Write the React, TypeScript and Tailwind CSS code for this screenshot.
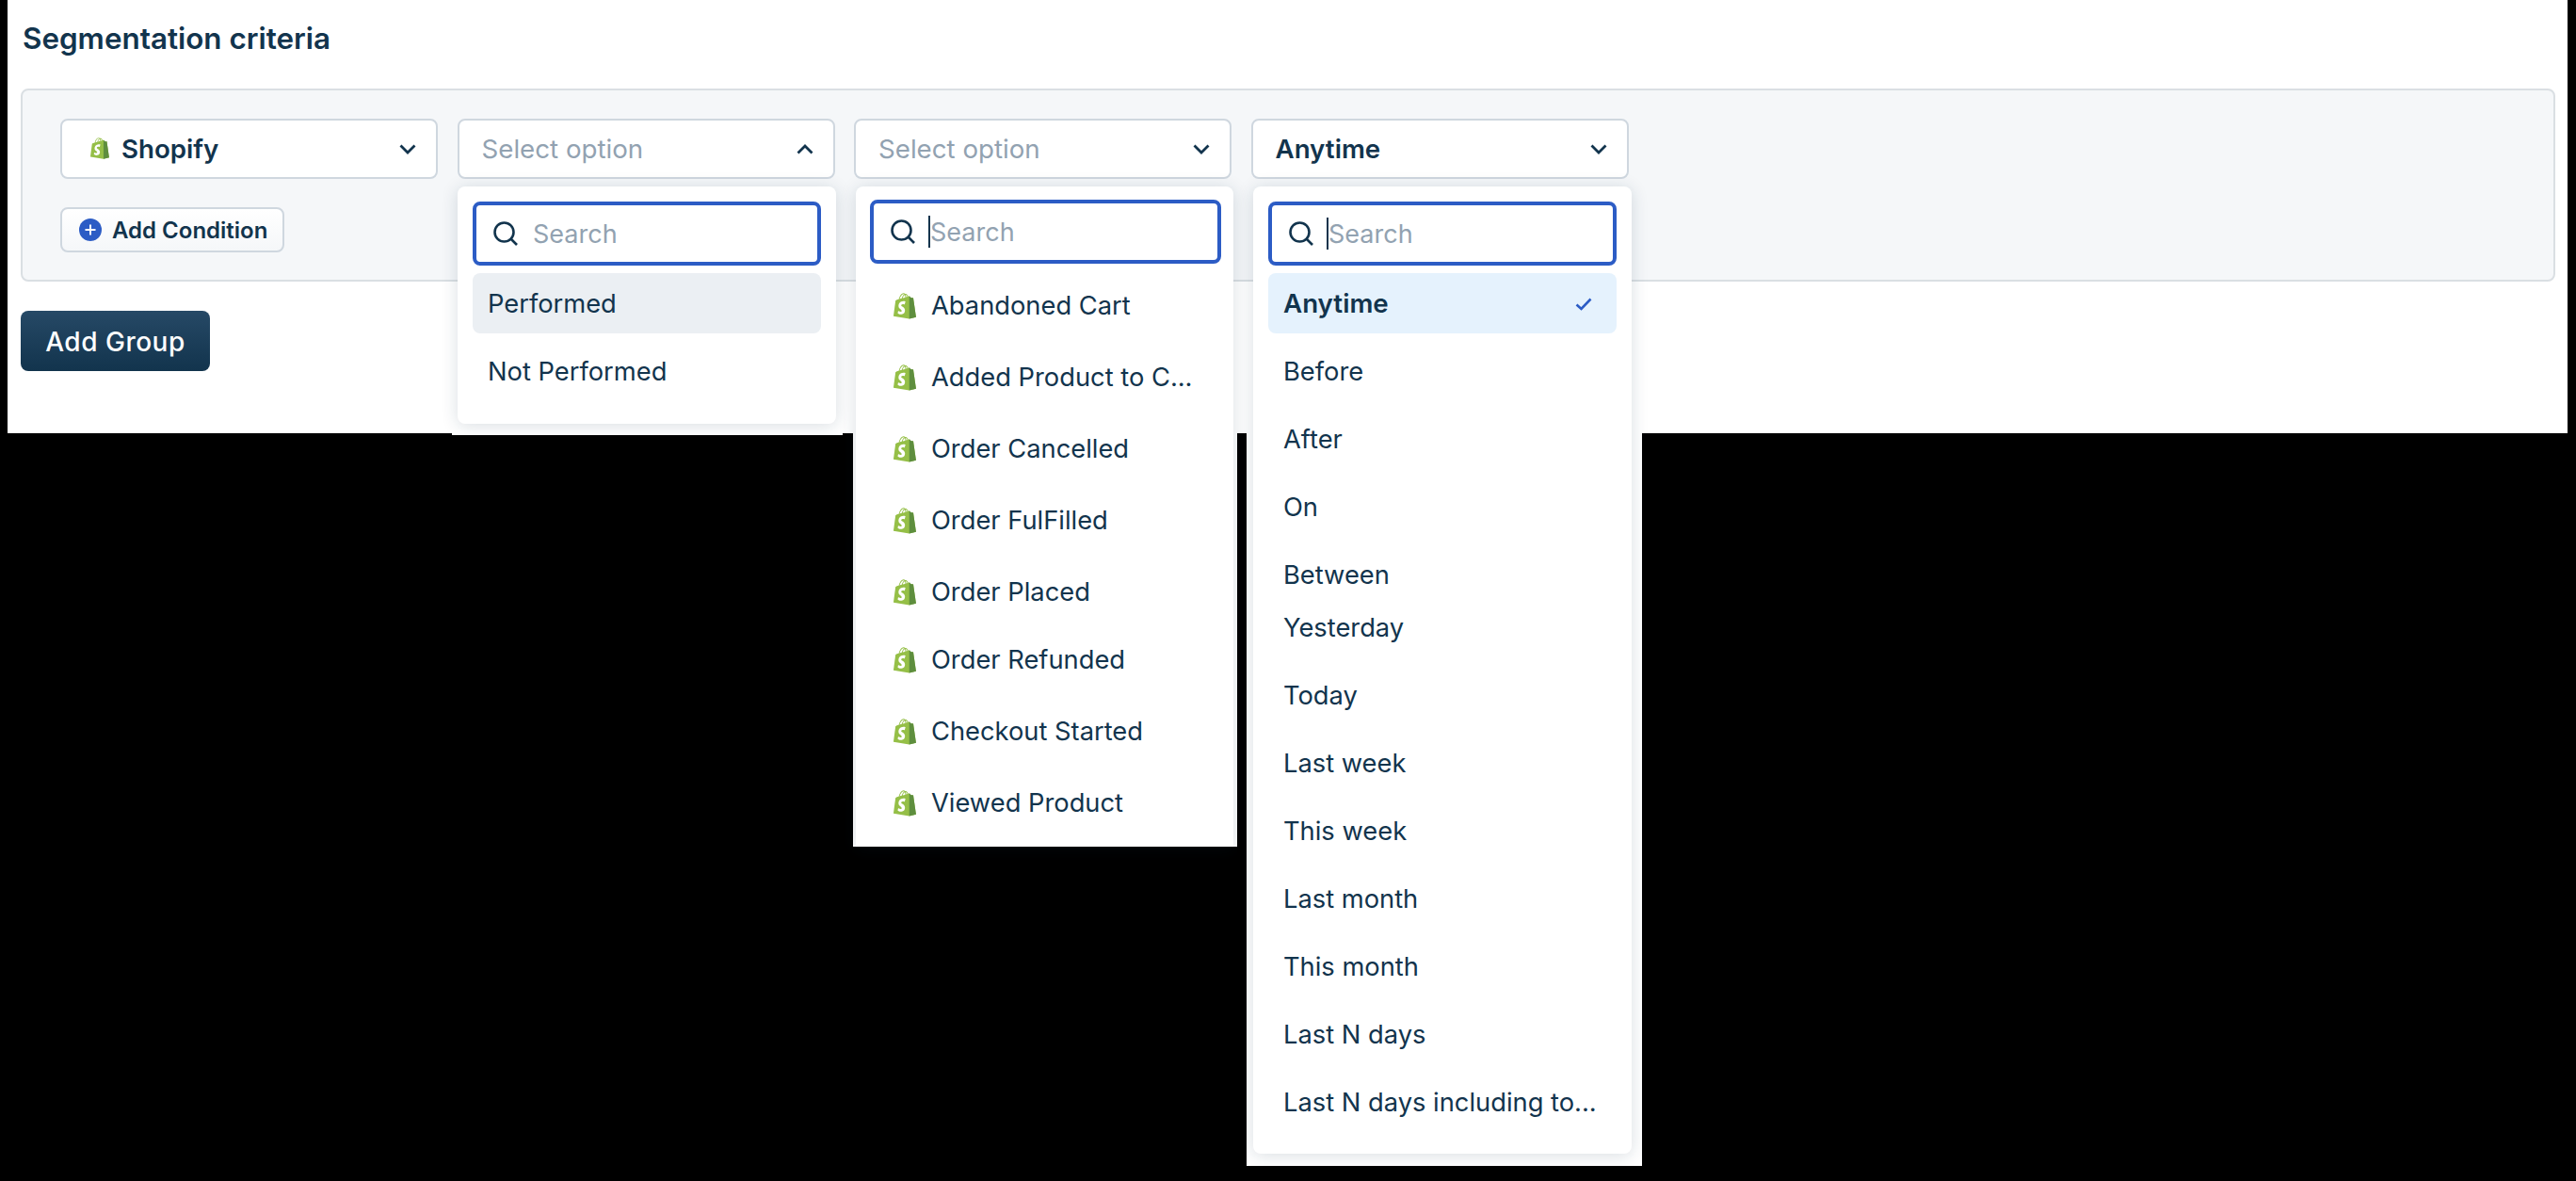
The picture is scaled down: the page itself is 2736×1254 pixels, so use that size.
const ink = "text-[#12344d]";

const ShopifyIcon = ({ className }: { className: string }) => (
  <svg viewBox="0 0 109.5 124.5" className={className}>
    <path
      fill="#95bf47"
      d="M95.9 23.9c-.1-.6-.6-1-1.1-1-.5 0-9.3-.2-9.3-.2s-7.4-7.2-8.1-7.9c-.7-.7-2.2-.5-2.7-.3 0 0-1.4.4-3.7 1.1-.4-1.3-1-2.8-1.8-4.4-2.6-5-6.5-7.7-11.1-7.7-.3 0-.6 0-1 .1-.1-.2-.3-.3-.4-.5C54.7.9 52.1-.1 49 0c-6 .2-12 4.5-16.8 12.2-3.4 5.4-6 12.2-6.8 17.5-6.9 2.1-11.7 3.6-11.8 3.7-3.5 1.1-3.6 1.2-4 4.5-.3 2.5-9.5 73-9.5 73l76.4 13.2 33.1-8.2c-.1-.1-13.6-91.4-13.7-92zm-28.7-7.1c-1.8.5-3.8 1.2-5.9 1.8 0-3-.4-7.3-1.8-10.9 4.5.9 6.7 6 7.7 9.1zm-10 3.1c-4 1.2-8.4 2.6-12.8 3.9 1.2-4.7 3.6-9.4 6.4-12.5 1.1-1.1 2.6-2.4 4.3-3.2 1.8 3.5 2.2 8.4 2.1 11.8zM49.1 4c1.4 0 2.6.3 3.6.9-1.6.8-3.2 2.1-4.7 3.6-3.8 4.1-6.7 10.5-7.9 16.6-3.6 1.1-7.2 2.2-10.5 3.2C31.7 18.8 39.8 4.3 49.1 4z"
    />
    <path
      fill="#5e8e3e"
      d="M94.8 22.9c-.5 0-9.3-.2-9.3-.2s-7.4-7.2-8.1-7.9c-.3-.3-.6-.4-1-.5V124l33.1-8.2S96 24.5 95.9 23.9c-.1-.6-.6-1-1.1-1z"
    />
    <path
      fill="#fff"
      d="M58 39.9l-3.8 14.4s-4.3-2-9.4-1.6c-7.5.5-7.5 5.2-7.5 6.4.4 6.4 17.3 7.8 18.3 22.9.7 11.9-6.3 20-16.4 20.6-12.2.8-18.9-6.4-18.9-6.4l2.6-11s6.7 5.1 12.1 4.7c3.5-.2 4.8-3.1 4.7-5.1-.5-8.4-14.3-7.9-15.2-21.7-.7-11.6 6.9-23.4 23.7-24.4 6.5-.5 9.8 1.2 9.8 1.2z"
    />
  </svg>
);

const Chevron = ({ up }: { up?: boolean }) => (
  <svg viewBox="0 0 18 11" fill="none" className="w-[18px] h-[11px] shrink-0">
    <path
      d={up ? "M1.500 9.500 9 2l7.500 7.500" : "M1.500 1.500 9 9l7.500-7.500"}
      stroke="#12344d"
      strokeWidth="2.800"
    />
  </svg>
);

const SearchBox = ({ caret, className }: { caret?: boolean; className: string }) => (
  <div
    className={`flex items-center h-[68px] border-4 border-[#2c5cc5] rounded-lg bg-white pl-[18px] ${className}`}
  >
    <svg viewBox="0 0 26 26" fill="none" className="w-[26px] h-[26px] shrink-0">
      <circle cx="11.500" cy="11.500" r="10" stroke="#12344d" strokeWidth="2.600" />
      <path d="M19 19l6 6" stroke="#12344d" strokeWidth="2.600" />
    </svg>
    <div className="relative ml-[14px] pl-[2px] pt-[2px] text-[27px] text-[#92a2b1]">
      {caret && <span className="absolute left-0 top-[4px] w-[2px] h-[34px] bg-[#12344d]" />}
      Search
    </div>
  </div>
);

const Select = ({
  label,
  placeholder,
  up,
  icon,
  children,
}: {
  label: string;
  placeholder?: boolean;
  up?: boolean;
  icon?: boolean;
  children?: React.ReactNode;
}) => (
  <div className="relative w-[401px]">
    <div className="flex items-center justify-between h-[64px] bg-white border-2 border-[#cfd7df] rounded-lg pl-[24px] pr-[21px]">
      <div className="flex items-center">
        {icon && <ShopifyIcon className="w-[20px] h-[23px] mr-[13px] ml-[6px]" />}
        <span
          className={`pt-[1px] ${
            placeholder ? "text-[27.700px] text-[#92a2b1]" : `text-[27.700px] font-semibold ${ink}`
          }`}
        >
          {label}
        </span>
      </div>
      <Chevron up={up} />
    </div>
    {children}
  </div>
);

const menuShadow = "shadow-[0_2px_18px_rgba(18,52,77,0.16)]";

const timeOptions = ["Before", "After", "On", "Between"];
const timeOptionsLower = [
  "Yesterday",
  "Today",
  "Last week",
  "This week",
  "Last month",
  "This month",
  "Last N days",
  "Last N days including to...",
];
const events = [
  "Abandoned Cart",
  "Added Product to C...",
  "Order Cancelled",
  "Order FulFilled",
  "Order Placed",
  "Order Refunded",
  "Checkout Started",
  "Viewed Product",
];

const Option = ({ text, className }: { text: string; className?: string }) => (
  <div
    className={`flex items-center h-[64px] px-[16px] pt-[3px] text-[27.300px] whitespace-nowrap ${ink} ${className ?? ""}`}
  >
    {text}
  </div>
);

export default function App() {
  return (
    <div className="min-h-[1254px] bg-black font-['Inter',sans-serif]">
      <div className="ml-2 w-[2719px] h-[460px] bg-white relative">
        <h1 className={`pl-[16px] pt-[22px] h-[94px] text-[31.400px] leading-[38px] font-semibold ${ink}`}>
          Segmentation criteria
        </h1>
        <div className="ml-[14px] w-[2692px] h-[205px] border-2 border-[#dadfe3] bg-[#f5f7f9] rounded-lg pl-[40px] pt-[30px]">
          <div className="flex gap-[20.500px]">
            <Select label="Shopify" icon />
            <Select label="Select option" placeholder up>
              <div className="absolute left-[-5.500px] top-[262px] w-[415px] h-[74px] bg-white" />
              <div
                className={`absolute left-[0.500px] top-[72px] w-[402px] h-[252px] bg-white rounded-lg ${menuShadow} px-[16px] pt-[16px]`}
              >
                <SearchBox className="w-[370px]" />
                <div className="flex flex-col gap-[8px] mt-[8px]">
                  <Option text="Performed" className="bg-[#ebeff3] rounded-lg" />
                  <Option text="Not Performed" />
                </div>
              </div>
            </Select>
            <Select label="Select option" placeholder>
              <div className="absolute left-[-1px] top-[334px] w-[408px] h-[439px] bg-white" />
              <div
                className={`absolute left-[2px] top-[72px] w-[401px] h-[701px] bg-white rounded-t-lg ${menuShadow} px-[15px] pt-[14px]`}
              >
                <SearchBox caret className="w-[373px]" />
                <div className="flex flex-col mt-[12px]">
                  {events.map((name, i) => (
                    <div
                      key={name}
                      className={`flex items-center h-[64px] pl-[25px] text-[27.300px] whitespace-nowrap ${ink} ${
                        i === 0 ? "" : i === 5 ? "mt-[8px]" : "mt-[12px]"
                      }`}
                    >
                      <ShopifyIcon className="w-[24px] h-[28px] mt-[1px] mr-[16px]" />
                      <span className="pt-[3px]">{name}</span>
                    </div>
                  ))}
                </div>
              </div>
            </Select>
            <Select label="Anytime">
              <div className="absolute left-[-4.500px] top-[334px] w-[420px] h-[778px] bg-white" />
              <div
                className={`absolute left-[2.500px] top-[72px] w-[402px] h-[1027px] bg-white rounded-lg ${menuShadow} px-[16px] pt-[16px]`}
              >
                <SearchBox caret className="w-[370px]" />
                <div className="flex flex-col mt-[8px]">
                  <div
                    className={`flex items-center justify-between h-[64px] px-[16px] pr-[26px] pt-[2px] bg-[#e5f2fd] rounded-lg text-[27.700px] font-semibold ${ink}`}
                  >
                    Anytime
                    <svg viewBox="0 0 18 14" fill="none" className="w-[18px] h-[14px]">
                      <path d="M1.500 7.500 6.500 12 16.500 1.500" stroke="#2c5cc5" strokeWidth="2.600" />
                    </svg>
                  </div>
                  {timeOptions.map((t) => (
                    <Option key={t} text={t} className="mt-[8px]" />
                  ))}
                  {timeOptionsLower.map((t, i) => (
                    <Option key={t} text={t} className={i === 0 ? "-mt-[8px]" : "mt-[8px]"} />
                  ))}
                </div>
              </div>
            </Select>
          </div>
          <button className="flex items-center gap-[11px] mt-[30px] h-[48px] w-[238px] pl-[18px] border-2 border-[#cfd7df] rounded-lg bg-gradient-to-b from-white to-[#f5f7f9]">
            <span className="flex items-center justify-center w-[24px] h-[24px] rounded-full bg-[#2c5cc5]">
              <svg viewBox="0 0 12 12" fill="none" className="w-[12px] h-[12px]">
                <path d="M6 0.500v11M0.500 6h11" stroke="#fff" strokeWidth="2" />
              </svg>
            </span>
            <span className={`pt-[1px] text-[24px] font-semibold ${ink}`}>Add Condition</span>
          </button>
        </div>
        <button className="block ml-[14px] mt-[31px] pt-[1px] w-[201px] h-[64px] rounded-lg bg-gradient-to-b from-[#264966] to-[#12344d] text-white text-[28px] font-medium tracking-[0.5px]">
          Add Group
        </button>
      </div>
    </div>
  );
}
